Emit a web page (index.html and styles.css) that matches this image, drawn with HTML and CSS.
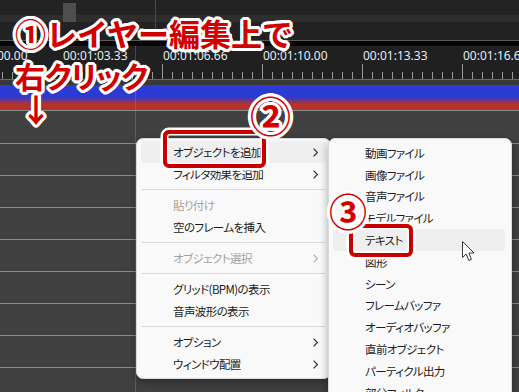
FILE: index.html
```html
<!DOCTYPE html>
<html lang="ja">
<head>
<meta charset="utf-8">
<title>レイヤー編集</title>
<link rel="stylesheet" href="styles.css">
</head>
<body>
<div class="screen">
  <div class="topbar">
    <div class="top-upper"></div>
    <div class="top-band"></div>
    <div class="top-lower"></div>
    <div class="top-edge"></div>
    <div class="thumb"></div>
    <div class="marker"></div>
  </div>
  <div class="ruler">
    <div class="labels">
      <span class="label">00:01:00.00</span>
      <span class="label">00:01:03.33</span>
      <span class="label">00:01:06.66</span>
      <span class="label">00:01:10.00</span>
      <span class="label">00:01:13.33</span>
      <span class="label">00:01:16.66</span>
    </div>
    <div class="ticks"></div>
  </div>
  <div class="ruler-foot"></div>
  <div class="layer-bar"></div>
  <div class="tracks">
    <div class="track"></div><div class="track"></div><div class="track"></div>
    <div class="track"></div><div class="track"></div><div class="track"></div>
    <div class="track"></div><div class="track"></div><div class="track"></div>
  </div>
  <div class="playhead"></div>

  <div class="menu menu-main">
    <div class="item hover"><span>オブジェクトを追加</span><svg class="chev" viewBox="0 0 5 9"><path d="M0.6 0.6 L4.4 4.5 L0.6 8.4"/></svg></div>
    <div class="item"><span>フィルタ効果を追加</span><svg class="chev" viewBox="0 0 5 9"><path d="M0.6 0.6 L4.4 4.5 L0.6 8.4"/></svg></div>
    <div class="sep"></div>
    <div class="item disabled"><span>貼り付け</span></div>
    <div class="item"><span>空のフレームを挿入</span></div>
    <div class="sep"></div>
    <div class="item disabled"><span>オブジェクト選択</span><svg class="chev" viewBox="0 0 5 9"><path d="M0.6 0.6 L4.4 4.5 L0.6 8.4"/></svg></div>
    <div class="sep"></div>
    <div class="item"><span>グリッド(BPM)の表示</span></div>
    <div class="item"><span>音声波形の表示</span></div>
    <div class="sep"></div>
    <div class="item"><span>オプション</span><svg class="chev" viewBox="0 0 5 9"><path d="M0.6 0.6 L4.4 4.5 L0.6 8.4"/></svg></div>
    <div class="item"><span>ウィンドウ配置</span><svg class="chev" viewBox="0 0 5 9"><path d="M0.6 0.6 L4.4 4.5 L0.6 8.4"/></svg></div>
  </div>

  <div class="menu menu-sub">
    <div class="item">動画ファイル</div>
    <div class="item">画像ファイル</div>
    <div class="item">音声ファイル</div>
    <div class="item">モデルファイル</div>
    <div class="item hover">テキスト</div>
    <div class="item">図形</div>
    <div class="item">シーン</div>
    <div class="item">フレームバッファ</div>
    <div class="item">オーディオバッファ</div>
    <div class="item">直前オブジェクト</div>
    <div class="item">パーティクル出力</div>
    <div class="item">部分フィルタ</div>
  </div>

  <svg class="cursor" viewBox="0 0 13 21"><path d="M0.5 0.5 L0.5 16.5 L4.2 13 L6.8 19.5 L9.4 18.4 L6.9 12 L12 12 Z"/></svg>

  <div class="box box1"></div>
  <div class="box box2"></div>

  <div class="anno line1">①レイヤー編集上で</div>
  <div class="anno line2">右クリック</div>
  <div class="anno arrow">↓</div>
  <div class="anno num2">②</div>
  <div class="anno num3">③</div>
</div>
</body>
</html>
```
FILE: styles.css
```css
html, body {
  margin: 0;
  padding: 0;
  background: #222;
}

.screen {
  position: relative;
  width: 519px;
  height: 392px;
  overflow: hidden;
  background: #222;
  display: flex;
  flex-direction: column;
  font-family: "Noto Sans", "Noto Sans CJK JP", sans-serif;
}

/* ---- top area ---- */
.topbar {
  position: relative;
  flex: none;
}
.top-upper { height: 15px; background: #232323; }
.top-band { height: 7px; background: #2e2e2e; }
.top-lower { height: 18px; background: #222; }
.top-edge {
  height: 5px;
  border-top: 1px solid #5a5a5a;
  background: #050505;
}
.thumb {
  position: absolute;
  left: 63px;
  top: 3px;
  width: 13px;
  height: 19px;
  background: #4e4e4e;
}
.marker {
  position: absolute;
  left: 155px;
  top: 0;
  width: 1px;
  height: 40px;
  background: #4a4a4a;
}

/* ---- ruler ---- */
.ruler {
  flex: none;
  height: 33px;
  background: #202020;
  border-bottom: 1px solid #6a6a6a;
  display: flex;
  flex-direction: column;
}
.labels {
  display: flex;
  margin-top: 2px;
  margin-left: -37px;
  height: 16px;
}
.label {
  flex: none;
  width: 100px;
  font-family: "Noto Sans", sans-serif;
  font-size: 12px;
  line-height: 16px;
  color: #e4ebf3;
}
.ticks {
  height: 15px;
  background-image:
    linear-gradient(to right, #9a9a9a 1px, transparent 1px),
    linear-gradient(to right, #9a9a9a 1px, transparent 1px);
  background-size: 100px 15px, 10px 7px;
  background-position: 62px 0, 2px 100%;
  background-repeat: repeat-x, repeat-x;
}
.ruler-foot {
  flex: none;
  height: 5px;
  background: #383838;
}
.layer-bar {
  flex: none;
  height: 25px;
  border-bottom: 1px solid #8a8a8a;
  background: linear-gradient(to bottom, #2b3ad3 0, #2b3ad3 12px, #b5322a 19px, #b5322a 25px);
}

/* ---- tracks ---- */
.tracks {
  flex: 1;
  display: flex;
  flex-direction: column;
  background: #404040;
}
.track {
  flex: none;
  height: 32px;
  box-sizing: border-box;
  border-top: 1px solid #8a8a8a;
}
.tracks .track:first-child { border-top: none; }

.playhead {
  position: absolute;
  left: 135px;
  top: 46px;
  width: 1px;
  height: 346px;
  background: rgba(150, 150, 150, 0.35);
}

/* ---- context menus ---- */
.menu {
  position: absolute;
  box-sizing: border-box;
  background: #f9f9f9;
  border: 1px solid #d9d9d9;
  border-radius: 7px;
  box-shadow: 0 3px 9px rgba(0, 0, 0, 0.35);
  font-family: "Noto Sans CJK JP", "Noto Sans", sans-serif;
  font-feature-settings: "palt";
  font-size: 11.5px;
  letter-spacing: -0.6px;
  color: #1b1b1b;
  display: flex;
  flex-direction: column;
}
.menu-main {
  left: 136px;
  top: 138px;
  width: 195px;
  padding: 2px 0 3px;
}
.menu-sub {
  left: 328px;
  top: 138px;
  width: 184px;
  padding: 3px 0;
}
.item {
  display: flex;
  align-items: center;
  justify-content: space-between;
  margin: 0 4px;
  padding: 0 8px 0 32px;
  border-radius: 4px;
  white-space: nowrap;
}
.menu-main .item { height: 22px; }
.menu-sub .item { height: 21.8px; margin-right: 6px; }
.item.hover { background: #efefef; }
.item.disabled { color: #a3a3a3; }
.chev {
  width: 5px;
  height: 9px;
  fill: none;
  stroke: #333;
  stroke-width: 1.2;
}
.item.disabled .chev { stroke: #b0b0b0; }
.sep {
  height: 9px;
  margin: 0 5px;
  background: linear-gradient(#d9d9d9, #d9d9d9) center / 100% 1px no-repeat;
}

.cursor {
  position: absolute;
  left: 462px;
  top: 241px;
  width: 13px;
  height: 21px;
  fill: #fff;
  stroke: #3a3a3a;
  stroke-width: 1;
}

/* ---- annotations ---- */
.box {
  position: absolute;
  box-sizing: border-box;
  border: 4px solid #c80000;
  border-radius: 6px;
  box-shadow: 0 0 0 2.5px #fff, inset 0 0 0 1.5px #fff;
}
.box1 { left: 163px; top: 130px; width: 103px; height: 38px; }
.box2 { left: 349px; top: 224px; width: 64px; height: 33px; }

.anno {
  position: absolute;
  font-family: "Noto Sans CJK JP", sans-serif;
  font-weight: 700;
  color: #d00000;
  white-space: nowrap;
  line-height: 1;
  text-shadow:
    3px 0 0 #fff, -3px 0 0 #fff, 0 3px 0 #fff, 0 -3px 0 #fff,
    2px 2px 0 #fff, -2px 2px 0 #fff, 2px -2px 0 #fff, -2px -2px 0 #fff,
    3px 1px 0 #fff, -3px 1px 0 #fff, 3px -1px 0 #fff, -3px -1px 0 #fff,
    1px 3px 0 #fff, -1px 3px 0 #fff, 1px -3px 0 #fff, -1px -3px 0 #fff;
}
.line1 { left: 15px; top: 17px; font-size: 31px; }
.line2 { left: 15px; top: 60px; font-size: 30px; font-feature-settings: "palt"; letter-spacing: -0.5px; }
.arrow { left: 20px; top: 92px; font-size: 32px; }
.num2 { left: 250px; top: 94px; font-size: 41px; }
.num3 { left: 329px; top: 191px; font-size: 38px; }
```
